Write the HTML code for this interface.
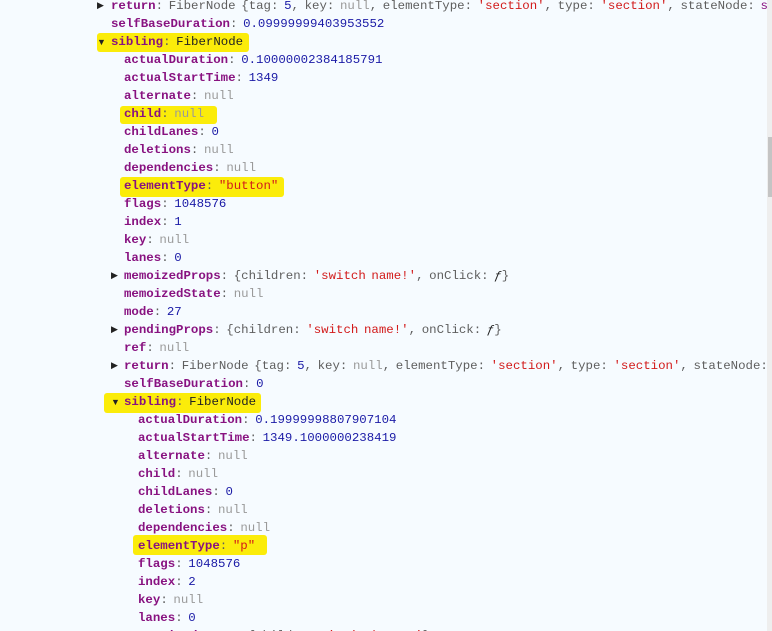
<!DOCTYPE html>
<html><head><meta charset="utf-8"><style>
html,body{margin:0;padding:0;width:772px;height:631px;overflow:hidden;background:#f6fbff;position:relative;}
.l{position:absolute;left:0;height:18px;line-height:18px;white-space:pre;font-family:"Liberation Mono","Noto Sans CJK KR",monospace;font-size:12.4px;color:#5e5e5e;word-spacing:-1.8px;}
.k{color:#881280;font-weight:bold;}
.n{color:#1a1aa6;}
.u{color:#9a9a9a;}
.s{color:#d21a1a;}
.a{position:absolute;font-size:9px;color:#222;}
.h{position:absolute;background:#fbec0a;border-radius:3px;}
.sb{position:absolute;left:767px;top:0;width:5px;height:631px;background:#eeeeee;}
.th{position:absolute;left:768px;top:137px;width:4px;height:60px;background:#c4c4c4;}
</style></head><body>
<div class="h" style="left:97px;top:33px;width:152px;height:19px"></div>
<div class="h" style="left:120px;top:106px;width:97px;height:18px"></div>
<div class="h" style="left:120px;top:177px;width:164px;height:20px"></div>
<div class="h" style="left:104px;top:393px;width:157px;height:20px"></div>
<div class="h" style="left:133px;top:535px;width:134px;height:20px"></div>

<div class="a" style="left:97px;top:0px">▶</div>
<div class="l" style="left:111px;top:-3px"><span class="k">return</span>: FiberNode {tag: <span class="n">5</span>, key: <span class="u">null</span>, elementType: <span class="s">'section'</span>, type: <span class="s">'section'</span>, stateNode: <span class="k" style="font-weight:normal">sec</span></div>
<div class="l" style="left:111px;top:15px"><span class="k">selfBaseDuration</span>: <span class="n">0.09999999403953552</span></div>
<div class="a" style="left:97px;top:37px">▼</div>
<div class="l" style="left:111px;top:33px"><span class="k">sibling</span>: <span style="color:#222">FiberNode</span></div>
<div class="l" style="left:124px;top:51px"><span class="k">actualDuration</span>: <span class="n">0.10000002384185791</span></div>
<div class="l" style="left:124px;top:69px"><span class="k">actualStartTime</span>: <span class="n">1349</span></div>
<div class="l" style="left:124px;top:87px"><span class="k">alternate</span>: <span class="u">null</span></div>
<div class="l" style="left:124px;top:105px"><span class="k">child</span>: <span class="u">null</span></div>
<div class="l" style="left:124px;top:123px"><span class="k">childLanes</span>: <span class="n">0</span></div>
<div class="l" style="left:124px;top:141px"><span class="k">deletions</span>: <span class="u">null</span></div>
<div class="l" style="left:124px;top:159px"><span class="k">dependencies</span>: <span class="u">null</span></div>
<div class="l" style="left:124px;top:177px"><span class="k">elementType</span>: <span class="s">"button"</span></div>
<div class="l" style="left:124px;top:195px"><span class="k">flags</span>: <span class="n">1048576</span></div>
<div class="l" style="left:124px;top:213px"><span class="k">index</span>: <span class="n">1</span></div>
<div class="l" style="left:124px;top:231px"><span class="k">key</span>: <span class="u">null</span></div>
<div class="l" style="left:124px;top:249px"><span class="k">lanes</span>: <span class="n">0</span></div>
<div class="a" style="left:111px;top:270px">▶</div>
<div class="l" style="left:124px;top:267px"><span class="k">memoizedProps</span>: {children: <span class="s">'switch name!'</span>, onClick: <i style="color:#222">ƒ</i>}</div>
<div class="l" style="left:124px;top:285px"><span class="k">memoizedState</span>: <span class="u">null</span></div>
<div class="l" style="left:124px;top:303px"><span class="k">mode</span>: <span class="n">27</span></div>
<div class="a" style="left:111px;top:324px">▶</div>
<div class="l" style="left:124px;top:321px"><span class="k">pendingProps</span>: {children: <span class="s">'switch name!'</span>, onClick: <i style="color:#222">ƒ</i>}</div>
<div class="l" style="left:124px;top:339px"><span class="k">ref</span>: <span class="u">null</span></div>
<div class="a" style="left:111px;top:360px">▶</div>
<div class="l" style="left:124px;top:357px"><span class="k">return</span>: FiberNode {tag: <span class="n">5</span>, key: <span class="u">null</span>, elementType: <span class="s">'section'</span>, type: <span class="s">'section'</span>, stateNode: <span class="k" style="font-weight:normal">s</span></div>
<div class="l" style="left:124px;top:375px"><span class="k">selfBaseDuration</span>: <span class="n">0</span></div>
<div class="a" style="left:111px;top:397px">▼</div>
<div class="l" style="left:124px;top:393px"><span class="k">sibling</span>: <span style="color:#222">FiberNode</span></div>
<div class="l" style="left:138px;top:411px"><span class="k">actualDuration</span>: <span class="n">0.19999998807907104</span></div>
<div class="l" style="left:138px;top:429px"><span class="k">actualStartTime</span>: <span class="n">1349.1000000238419</span></div>
<div class="l" style="left:138px;top:447px"><span class="k">alternate</span>: <span class="u">null</span></div>
<div class="l" style="left:138px;top:465px"><span class="k">child</span>: <span class="u">null</span></div>
<div class="l" style="left:138px;top:483px"><span class="k">childLanes</span>: <span class="n">0</span></div>
<div class="l" style="left:138px;top:501px"><span class="k">deletions</span>: <span class="u">null</span></div>
<div class="l" style="left:138px;top:519px"><span class="k">dependencies</span>: <span class="u">null</span></div>
<div class="l" style="left:138px;top:537px"><span class="k">elementType</span>: <span class="s">"p"</span></div>
<div class="l" style="left:138px;top:555px"><span class="k">flags</span>: <span class="n">1048576</span></div>
<div class="l" style="left:138px;top:573px"><span class="k">index</span>: <span class="n">2</span></div>
<div class="l" style="left:138px;top:591px"><span class="k">key</span>: <span class="u">null</span></div>
<div class="l" style="left:138px;top:609px"><span class="k">lanes</span>: <span class="n">0</span></div>
<div class="l" style="left:138px;top:627px"><span class="k">memoizedProps</span>: {children: <span class="s">'switch Text'</span>}</div>
<div class="sb"></div><div class="th"></div>
</body></html>
